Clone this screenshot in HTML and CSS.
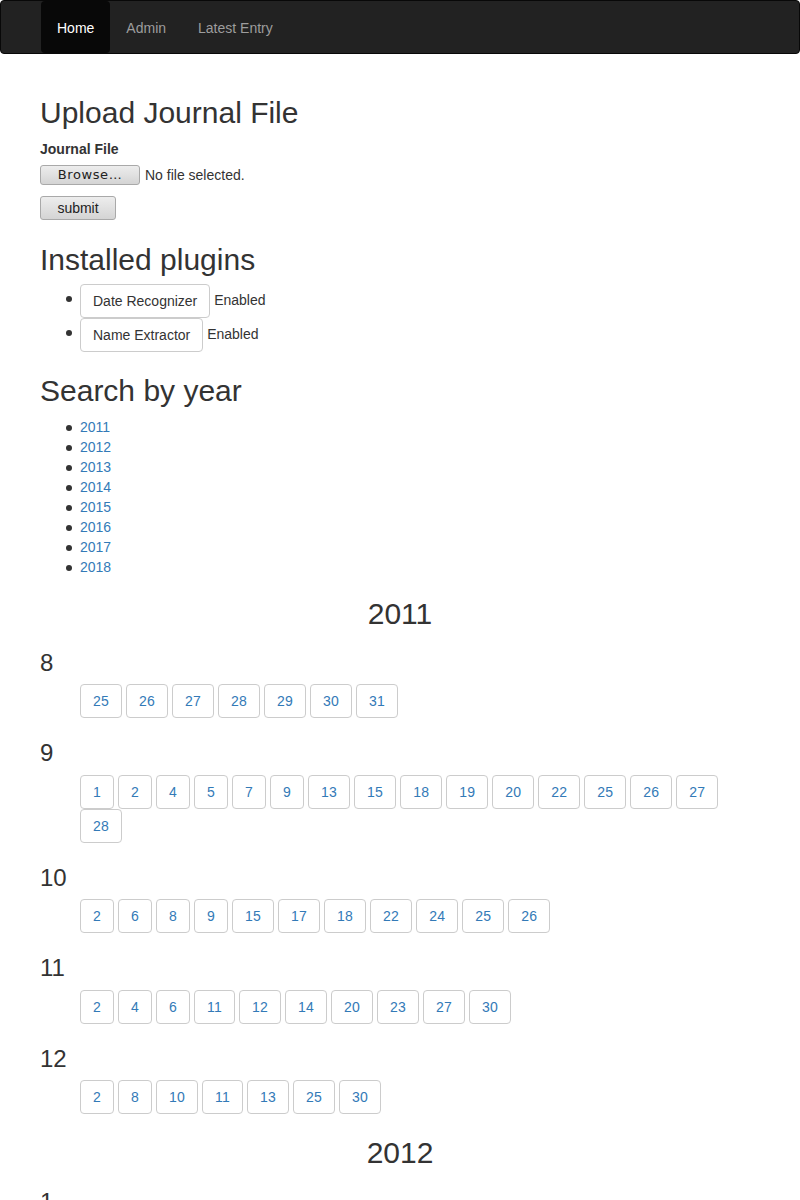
FILE: index.html
```html
<!DOCTYPE html>
<html>
<head>
<meta charset="utf-8">
<title>Journal</title>
<link rel="stylesheet" href="styles.css">
</head>
<body>
<nav class="navbar">
  <ul class="nav">
    <li class="active"><a href="#">Home</a></li>
    <li><a href="#">Admin</a></li>
    <li><a href="#">Latest Entry</a></li>
  </ul>
</nav>
<div class="container">
  <h2>Upload Journal File</h2>
  <form class="upload">
    <label class="label">Journal File</label>
    <div class="file-row"><span class="file-btn">Browse…</span><span class="file-text">No file selected.</span></div>
    <span class="submit-btn">submit</span>
  </form>

  <h2>Installed plugins</h2>
  <ul class="plugins bullets">
    <li><span class="btn">Date Recognizer</span> Enabled</li>
    <li><span class="btn">Name Extractor</span> Enabled</li>
  </ul>

  <h2>Search by year</h2>
  <ul class="years bullets">
    <li><a href="#">2011</a></li>
    <li><a href="#">2012</a></li>
    <li><a href="#">2013</a></li>
    <li><a href="#">2014</a></li>
    <li><a href="#">2015</a></li>
    <li><a href="#">2016</a></li>
    <li><a href="#">2017</a></li>
    <li><a href="#">2018</a></li>
  </ul>

  <h2 class="year">2011</h2>
  <h3>8</h3>
  <ul class="days">
    <li><a class="day" href="#">25</a></li><li><a class="day" href="#">26</a></li><li><a class="day" href="#">27</a></li><li><a class="day" href="#">28</a></li><li><a class="day" href="#">29</a></li><li><a class="day" href="#">30</a></li><li><a class="day" href="#">31</a></li>
  </ul>
  <h3>9</h3>
  <ul class="days">
    <li><a class="day" href="#">1</a></li><li><a class="day" href="#">2</a></li><li><a class="day" href="#">4</a></li><li><a class="day" href="#">5</a></li><li><a class="day" href="#">7</a></li><li><a class="day" href="#">9</a></li><li><a class="day" href="#">13</a></li><li><a class="day" href="#">15</a></li><li><a class="day" href="#">18</a></li><li><a class="day" href="#">19</a></li><li><a class="day" href="#">20</a></li><li><a class="day" href="#">22</a></li><li><a class="day" href="#">25</a></li><li><a class="day" href="#">26</a></li><li><a class="day" href="#">27</a></li><li><a class="day" href="#">28</a></li>
  </ul>
  <h3>10</h3>
  <ul class="days">
    <li><a class="day" href="#">2</a></li><li><a class="day" href="#">6</a></li><li><a class="day" href="#">8</a></li><li><a class="day" href="#">9</a></li><li><a class="day" href="#">15</a></li><li><a class="day" href="#">17</a></li><li><a class="day" href="#">18</a></li><li><a class="day" href="#">22</a></li><li><a class="day" href="#">24</a></li><li><a class="day" href="#">25</a></li><li><a class="day" href="#">26</a></li>
  </ul>
  <h3>11</h3>
  <ul class="days">
    <li><a class="day" href="#">2</a></li><li><a class="day" href="#">4</a></li><li><a class="day" href="#">6</a></li><li><a class="day" href="#">11</a></li><li><a class="day" href="#">12</a></li><li><a class="day" href="#">14</a></li><li><a class="day" href="#">20</a></li><li><a class="day" href="#">23</a></li><li><a class="day" href="#">27</a></li><li><a class="day" href="#">30</a></li>
  </ul>
  <h3>12</h3>
  <ul class="days">
    <li><a class="day" href="#">2</a></li><li><a class="day" href="#">8</a></li><li><a class="day" href="#">10</a></li><li><a class="day" href="#">11</a></li><li><a class="day" href="#">13</a></li><li><a class="day" href="#">25</a></li><li><a class="day" href="#">30</a></li>
  </ul>

  <h2 class="year">2012</h2>
  <h3>1</h3>
</div>
</body>
</html>
```
FILE: styles.css
```css
html, body {
  margin: 0;
  padding: 0;
}
body {
  font-family: "Liberation Sans", Arial, sans-serif;
  font-size: 14px;
  line-height: 20px;
  color: #333;
  background: #fff;
}
a {
  color: #337ab7;
  text-decoration: none;
}
.navbar {
  background: #222;
  border: 1px solid #080808;
  border-radius: 4px;
  min-height: 52px;
  margin-bottom: 20px;
}
.nav {
  list-style: none;
  margin: 0;
  padding: 0 0 0 40px;
  display: flex;
}
.nav li a {
  display: block;
  padding: 17px 16px 15px;
  line-height: 20px;
  color: #9d9d9d;
  border-radius: 4px;
}
.nav li.active a {
  background: #080808;
  color: #fff;
}
.container {
  padding: 2px 40px 0;
}
h2 {
  font-size: 30px;
  font-weight: 500;
  line-height: 33px;
  margin: 20px 0 10px;
}
h3 {
  font-size: 24px;
  font-weight: 500;
  line-height: 26.4px;
  margin: 20px 0 8px;
}
.year {
  text-align: center;
}
.upload {
  margin-bottom: 23px;
}
.label {
  display: block;
  font-weight: bold;
  margin-bottom: 5px;
}
.file-row {
  display: flex;
  align-items: center;
  gap: 5px;
  height: 21px;
}
.file-btn {
  box-sizing: border-box;
  width: 100px;
  height: 20px;
  border: 1px solid #a9a9a9;
  border-radius: 3px;
  background: linear-gradient(#ededed, #d4d4d4);
  font-family: "DejaVu Sans", sans-serif;
  font-size: 13px;
  letter-spacing: 0.6px;
  line-height: 18px;
  text-align: center;
  color: #222;
}
.file-text {
  font-size: 14px;
}
.submit-btn {
  display: block;
  box-sizing: border-box;
  width: 76px;
  height: 24px;
  margin-top: 11px;
  border: 1px solid #a9a9a9;
  border-radius: 3px;
  background: linear-gradient(#ededed, #d4d4d4);
  font-size: 14px;
  line-height: 22px;
  text-align: center;
  color: #222;
}
.bullets {
  list-style: none;
  margin: 0 0 10px;
  padding-left: 40px;
}
.bullets li::before {
  content: "";
  display: inline-block;
  width: 6px;
  height: 6px;
  border-radius: 50%;
  background: #333;
  margin-left: -14px;
  margin-right: 8px;
  vertical-align: middle;
}
.plugins {
  margin: -2px 0 0;
  padding-bottom: 2px;
}
.plugins li::before {
  position: relative;
  top: -2px;
}
.btn {
  display: inline-block;
  padding: 6px 12px;
  border: 1px solid #ccc;
  border-radius: 4px;
  background: #fff;
  color: #333;
  line-height: 20px;
  vertical-align: middle;
}
.days {
  list-style: none;
  margin: 0;
  padding: 0 0 2px 40px;
  display: flex;
  flex-wrap: wrap;
  column-gap: 4px;
}
.day {
  display: block;
  padding: 6px 12px;
  border: 1px solid #ccc;
  border-radius: 4px;
  background: #fff;
  line-height: 20px;
  letter-spacing: 0.22px;
}
```
